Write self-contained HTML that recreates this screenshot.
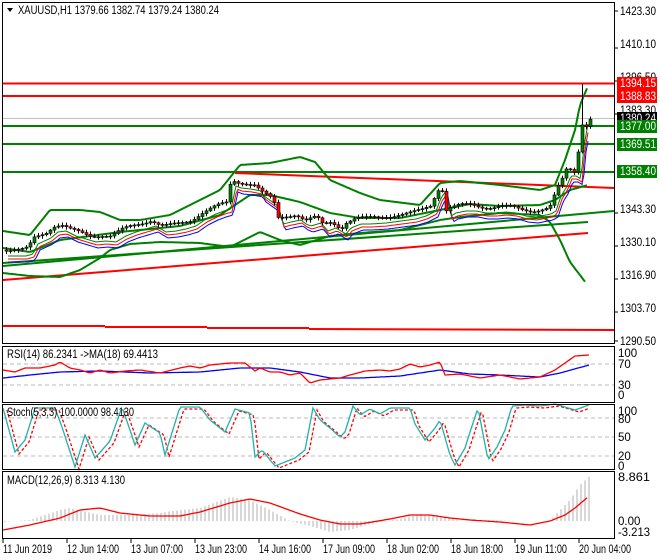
<!DOCTYPE html>
<html><head><meta charset="utf-8"><style>
body{margin:0;background:#fff;width:660px;height:560px;overflow:hidden;font-family:"Liberation Sans",sans-serif;}
svg{position:absolute;left:0;top:0}
text{font-family:"Liberation Sans",sans-serif;font-size:11.5px;fill:#000}
</style></head><body>
<svg id="s" width="660" height="560" xmlns="http://www.w3.org/2000/svg">
<rect width="660" height="560" fill="#fff"/>
<g id="g"></g>
<rect x="2.5" y="2.5" width="612" height="341" fill="none" stroke="#000"/>
<rect x="2.5" y="346.5" width="612" height="56" fill="none" stroke="#000"/>
<rect x="2.5" y="404.5" width="612" height="65" fill="none" stroke="#000"/>
<rect x="2.5" y="471.5" width="612" height="67" fill="none" stroke="#000"/>
<path d="M7 8 L13 8 L10 12 Z" fill="#000"/>
<text x="18" y="14" textLength="201" lengthAdjust="spacingAndGlyphs">XAUUSD,H1  1379.66 1382.74 1379.24 1380.24</text>
<text x="7" y="358" textLength="151" lengthAdjust="spacingAndGlyphs">RSI(14) 86.2341  -&gt;MA(18) 69.4413</text>
<text x="7" y="416" textLength="127" lengthAdjust="spacingAndGlyphs">Stoch(5,3,3) 100.0000 98.4130</text>
<text x="7" y="484" textLength="118" lengthAdjust="spacingAndGlyphs">MACD(12,26,9) 8.313 4.130</text>
<g>
<text x="620" y="15" textLength="36" lengthAdjust="spacingAndGlyphs">1423.30</text>
<text x="620" y="48" textLength="36" lengthAdjust="spacingAndGlyphs">1410.10</text>
<text x="620" y="81" textLength="36" lengthAdjust="spacingAndGlyphs">1396.50</text>
<text x="620" y="114" textLength="36" lengthAdjust="spacingAndGlyphs">1383.30</text>
<text x="620" y="213" textLength="36" lengthAdjust="spacingAndGlyphs">1343.30</text>
<text x="620" y="246" textLength="36" lengthAdjust="spacingAndGlyphs">1330.10</text>
<text x="620" y="279" textLength="36" lengthAdjust="spacingAndGlyphs">1316.90</text>
<text x="620" y="312" textLength="36" lengthAdjust="spacingAndGlyphs">1303.70</text>
<text x="620" y="345" textLength="36" lengthAdjust="spacingAndGlyphs">1290.50</text>
<rect x="617" y="77" width="40" height="13" fill="#f00"/><text x="620" y="87" textLength="36" lengthAdjust="spacingAndGlyphs" style="fill:#fff">1394.15</text>
<rect x="617" y="90" width="40" height="13" fill="#f00"/><text x="620" y="100" textLength="36" lengthAdjust="spacingAndGlyphs" style="fill:#fff">1388.83</text>
<rect x="617" y="112" width="40" height="12" fill="#000"/><text x="620" y="122" textLength="36" lengthAdjust="spacingAndGlyphs" style="fill:#fff">1380.24</text>
<rect x="617" y="120" width="40" height="13" fill="#008000"/><text x="620" y="130" textLength="36" lengthAdjust="spacingAndGlyphs" style="fill:#fff">1377.00</text>
<rect x="617" y="138" width="40" height="13" fill="#008000"/><text x="620" y="148" textLength="36" lengthAdjust="spacingAndGlyphs" style="fill:#fff">1369.51</text>
<rect x="617" y="165" width="40" height="13" fill="#008000"/><text x="620" y="175" textLength="36" lengthAdjust="spacingAndGlyphs" style="fill:#fff">1358.40</text>
<text x="618" y="357">100</text><text x="618" y="368">70</text><text x="618" y="389">30</text><text x="618" y="399">0</text>
<text x="618" y="415">100</text><text x="618" y="423">80</text><text x="618" y="441">50</text><text x="618" y="460">20</text><text x="618" y="470">0</text>
<text x="618" y="481" textLength="32" lengthAdjust="spacingAndGlyphs">8.861</text><text x="618" y="525">0.00</text><text x="618" y="536" textLength="32" lengthAdjust="spacingAndGlyphs">-3.213</text>
</g>
<text x="3" y="553" textLength="49" lengthAdjust="spacingAndGlyphs">11 Jun 2019</text>
<text x="67" y="553" textLength="52" lengthAdjust="spacingAndGlyphs">12 Jun 14:00</text>
<text x="131" y="553" textLength="52" lengthAdjust="spacingAndGlyphs">13 Jun 07:00</text>
<text x="195" y="553" textLength="52" lengthAdjust="spacingAndGlyphs">13 Jun 23:00</text>
<text x="259" y="553" textLength="52" lengthAdjust="spacingAndGlyphs">14 Jun 16:00</text>
<text x="323" y="553" textLength="52" lengthAdjust="spacingAndGlyphs">17 Jun 09:00</text>
<text x="387" y="553" textLength="52" lengthAdjust="spacingAndGlyphs">18 Jun 02:00</text>
<text x="451" y="553" textLength="52" lengthAdjust="spacingAndGlyphs">18 Jun 18:00</text>
<text x="515" y="553" textLength="52" lengthAdjust="spacingAndGlyphs">19 Jun 11:00</text>
<text x="579" y="553" textLength="52" lengthAdjust="spacingAndGlyphs">20 Jun 04:00</text>
</svg>
<script>
(function(){
var NS="http://www.w3.org/2000/svg",g=document.getElementById("g");
function el(t,a){var e=document.createElementNS(NS,t);for(var k in a)e.setAttribute(k,a[k]);g.appendChild(e);return e;}
function interp(p,x){if(x<=p[0][0])return p[0][1];for(var i=1;i<p.length;i++){if(x<=p[i][0]){var a=p[i-1],b=p[i];return a[1]+(b[1]-a[1])*(x-a[0])/(b[0]-a[0]);}}return p[p.length-1][1];}
function curve(p,x0,x1,f,col,w,dash){var d="";for(var x=x0;x<=x1;x+=2){var y=interp(p,x)+(f?f(x):0);d+=(d?"L":"M")+x+" "+y.toFixed(1);}var a={d:d,fill:"none",stroke:col,"stroke-width":w};if(dash)a["stroke-dasharray"]=dash;el("path",a);}
function line(x1,y1,x2,y2,c,w,dash){var a={x1:x1,y1:y1,x2:x2,y2:y2,stroke:c,"stroke-width":w};if(dash)a["stroke-dasharray"]=dash;el("line",a);}
var T=[3,67,131,195,259,323,387,451,515,579];T.forEach(function(x){line(x,539,x,543,"#000",1)});
[11,48,81,114,213,246,279,312,341].forEach(function(y){line(614,y,618,y,"#000",1)});
[364,385].forEach(function(y){line(3,y,614,y,"#bbb",1,"4 3")});
[418,437,456].forEach(function(y){line(3,y,614,y,"#bbb",1,"4 3")});
line(3,83.5,614,83.5,"#f00",2);line(3,96,614,96,"#f00",2);
line(3,118.5,614,118.5,"#c0c0c0",1);
line(3,126,614,126,"#008000",2);line(3,144,614,144,"#008000",2);line(3,172,614,172,"#008000",2);
line(235,173,614,188,"#f00",2);
line(3,280,588,233,"#f00",2);
line(3,326,105,326,"#f00",2);line(105,327,207,327,"#f00",2);line(207,328,309,328,"#f00",2);line(309,329,614,330,"#f00",2);
line(3,266,614,211,"#008000",2);line(3,263,588,222,"#008000",2);
var up=[[3,231],[30,235],[50,210],[80,210],[100,212],[120,220],[140,220],[170,215],[200,200],[220,190],[240,165],[270,163],[300,157],[315,162],[330,180],[360,193],[380,200],[420,205],[440,183],[460,181],[500,185],[540,190],[555,185],[565,160],[575,130],[580,105],[588,86]];
var mid=[[3,248],[30,252],[60,240],[120,232],[180,226],[220,215],[250,195],[270,195],[300,202],[330,213],[360,218],[400,218],[440,210],[470,204],[500,206],[540,205],[555,200],[570,190],[588,185]];
var lo=[[3,273],[30,276],[60,277],[80,270],[100,258],[110,250],[130,244],[160,242],[200,243],[230,247],[260,232],[280,240],[300,245],[330,236],[360,233],[400,230],[440,220],[460,217],[500,213],[540,215],[550,222],[560,240],[570,262],[586,283]];
curve(up,3,588,null,"#008000",2);curve(mid,3,588,null,"#008000",2);curve(lo,3,586,null,"#008000",2);
var P=[[5,250],[20,250],[27,248],[32,238],[45,232],[52,226],[60,225],[70,230],[80,233],[90,236],[100,235],[110,236],[120,230],[130,226],[140,223],[150,220],[160,226],[170,225],[180,223],[190,220],[200,213],[210,208],[218,205],[225,203],[230,180],[235,182],[245,183],[255,185],[258,190],[265,195],[272,200],[277,218],[285,216],[295,214],[300,218],[305,220],[315,217],[322,225],[330,222],[340,228],[345,222],[355,218],[365,218],[380,217],[395,215],[410,213],[420,210],[430,205],[435,192],[440,185],[445,210],[450,207],[460,205],[470,205],[480,207],[490,207],[500,206],[510,207],[520,210],[530,211],[545,208],[550,205],[555,190],[560,182],[565,170],[570,170],[575,173],[578,140],[582,118],[585,125],[589,118]];
var ma1=P.map(function(p){return [p[0]+6,p[1]+6]}),ma2=P.map(function(p){return [p[0]+7,p[1]+9]}),ma3=P.map(function(p){return [p[0]+8,p[1]+12]});
curve(ma3,8,588,null,"#00f",1);curve(ma2,8,588,null,"#f00",1);curve(ma1,8,588,null,"#008000",1);
var prev=250;
for(var x=5;x<=589;x+=4){var c=interp(P,x)+Math.sin(x*1.7)*1.5,o=prev;var hi=Math.min(o,c)-1-Math.abs(Math.sin(x*0.9))*2,lw=Math.max(o,c)+1+Math.abs(Math.cos(x*1.3))*2;
 if(x>=581&&x<=584){hi=84;}
 line(x+1.5,hi,x+1.5,lw,"#000",1);
 var bt=Math.min(o,c),h=Math.max(1,Math.abs(o-c));
 el("rect",{x:x,y:bt,width:3,height:h,fill:c<o?"#008000":"#f00",stroke:"#000","stroke-width":0.6});
 prev=c;}
var R=[[3,370],[15,372],[25,368],[40,368],[55,365],[60,362],[70,368],[80,370],[90,373],[100,370],[110,373],[125,371],[140,370],[160,373],[180,368],[190,366],[200,368],[210,365],[220,364],[230,363],[245,363],[255,371],[260,368],[270,372],[280,372],[290,375],[300,373],[310,383],[320,380],[340,378],[350,375],[365,371],[380,370],[390,371],[400,369],[410,364],[420,367],[430,365],[440,362],[445,375],[460,374],[480,378],[500,375],[520,379],[540,377],[555,370],[565,363],[575,356],[589,355]];
var RM=[[3,378],[30,375],[60,372],[100,371],[150,373],[200,372],[240,368],[270,368],[300,372],[330,378],[360,378],[400,376],[440,370],[470,374],[500,375],[540,377],[560,373],[589,365]];
curve(RM,3,589,null,"#00f",1.3);curve(R,3,589,null,"#f00",1.3);
var S=[[3,408],[15,452],[25,440],[35,408],[55,408],[62,427],[75,467],[85,435],[95,458],[110,441],[122,407],[130,430],[135,445],[145,423],[160,433],[165,455],[180,407],[200,407],[210,420],[225,432],[235,409],[250,413],[255,457],[262,450],[275,466],[295,458],[305,450],[313,408],[320,420],[330,428],[340,437],[345,432],[353,406],[360,415],[370,409],[380,414],[390,408],[400,408],[410,408],[415,424],[425,440],[435,428],[440,420],[450,455],[455,465],[465,448],[470,432],[478,408],[488,460],[497,447],[505,430],[512,406],[525,405],[540,406],[555,404],[575,410],[589,405]];
var S2=S.map(function(p){return [p[0]+4,p[1]+2]});
curve(S2,7,589,null,"#f00",1.3,"3 2");curve(S,3,589,null,"#20b2aa",1.3);
var H=[[3,522],[30,520],[60,510],[70,508],[100,515],[130,515],[160,513],[180,510],[200,508],[230,497],[250,500],[270,510],[290,521],[310,526],[330,532],[350,530],[370,524],[400,519],[420,514],[440,516],[460,521],[490,520],[520,521],[550,521],[560,510],[570,500],[580,485],[589,477]];
for(var x2=5;x2<=589;x2+=4){var y=interp(H,x2);line(x2,521,x2,y,"#b0b0b0",1);}
var M2=[[3,530],[30,525],[60,518],[80,510],[100,508],[120,513],[150,516],[180,516],[200,512],[230,503],[250,499],[270,503],[300,514],[320,520],[340,524],[360,524],[390,519],[410,515],[430,515],[450,518],[470,520],[500,522],[530,525],[550,521],[565,515],[575,508],[588,497]];
curve(M2,3,588,null,"#f00",1.3);
})();
</script>
</body></html>
